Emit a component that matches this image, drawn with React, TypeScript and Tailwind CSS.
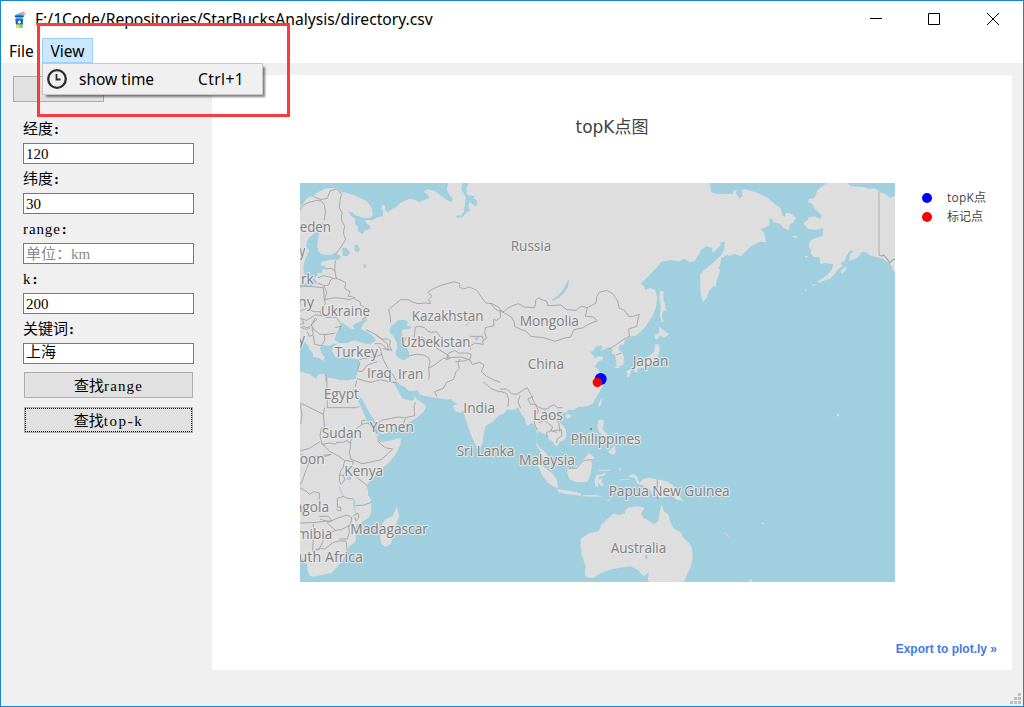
import { useState } from "react";

const LAND = [
  "M0 70 L10 62 18 48 26 42 40 40 48 30 62 24 78 16 95 15 112 16 124 28 135 28 152 34 175 42 200 54 214 72 219 92 212 104 195 105 180 101 165 96 156 88 145 86 152 98 166 108 164 124 174 130 172 144 187 152 196 142 211 137 210 128 200 122 195 110 216 112 234 103 248 99 250 85 244 76 247 66 256 68 254 80 264 88 279 76 292 70 300 60 328 47 346 50 356 58 372 52 388 44 384 34 370 26 382 19 405 24 425 40 440 50 455 58 458 48 448 36 441 20 444 0 L487 0 484 22 490 28 498 44 494 70 492 86 484 97 466 98 474 104 488 103 500 88 510 82 505 70 508 56 524 68 532 66 530 52 520 46 524 38 512 38 500 34 500 12 506 0 L1230 0 1233 26 1245 32 1298 33 1302 22 1313 22 1308 30 1318 46 1328 40 1324 22 1334 18 1355 24 1380 33 1402 44 1420 60 1442 76 1448 98 1456 101 1457 90 1470 90 1480 98 1488 106 1478 120 1470 124 1466 142 1450 134 1440 122 1420 118 1416 106 1408 108 1408 124 1400 132 1382 138 1390 146 1396 162 1398 178 1380 176 1350 192 1322 220 1304 212 1286 220 1284 214 1264 226 1260 246 1254 254 1260 262 1254 284 1250 290 1248 308 1236 312 1226 326 1220 346 1208 358 1202 332 1200 275 1212 262 1238 240 1264 216 1272 200 1275 176 1262 178 1260 190 1238 210 1236 194 1220 190 1202 202 1198 212 1184 234 1168 238 1160 230 1148 228 1140 235 1110 232 1084 236 1066 258 1040 284 1022 302 1032 310 1036 320 1050 315 1066 322 1072 345 1068 372 1056 402 1034 434 1008 458 992 460 976 470 972 484 960 486 956 500 968 510 972 526 970 545 950 553 948 530 945 515 935 512 938 498 926 492 910 500 900 503 908 492 904 486 886 492 882 502 872 506 878 516 886 526 892 520 910 521 908 530 892 538 885 552 896 560 902 575 912 590 908 608 900 625 888 644 878 662 860 670 835 672 818 682 804 680 800 690 788 686 776 680 770 690 762 696 768 706 782 720 796 736 800 754 794 770 780 776 770 790 762 784 760 776 746 768 740 756 726 750 716 744 710 758 709 778 720 796 730 802 742 816 750 836 756 850 744 842 730 826 722 806 710 788 708 776 712 754 704 728 694 718 690 724 680 728 674 706 664 694 656 674 642 680 620 680 612 692 598 696 580 714 556 730 551 752 548 778 540 796 532 796 518 768 505 735 496 705 492 682 480 690 466 684 458 670 472 664 460 655 452 648 440 650 410 644 385 641 360 635 352 622 340 624 326 624 312 610 300 606 292 597 278 595 288 612 296 625 306 646 322 650 336 654 343 648 342 638 352 650 368 660 378 672 370 688 350 704 330 716 308 728 280 738 250 754 240 752 236 736 226 716 210 692 198 672 188 650 172 636 166 618 156 620 172 648 182 668 190 690 204 716 214 732 224 744 234 754 236 766 248 777 276 772 302 764 302 784 288 812 268 838 246 856 226 878 208 896 198 908 204 920 204 936 212 948 214 986 208 1002 194 1012 170 1027 160 1040 168 1060 166 1078 148 1090 142 1106 130 1128 112 1152 95 1170 68 1175 40 1181 28 1178 22 1160 22 1146 10 1130 0 1115Z",
  "M1580 0 L1640 0 1655 10 1690 12 1710 18 1725 16 1740 28 1755 32 1770 44 1785 38 1785 270 1778 258 1776 250 1766 240 1750 228 1730 222 1712 218 1698 208 1686 206 1676 220 1666 228 1648 234 1650 214 1662 202 1650 203 1640 218 1634 234 1622 240 1628 248 1612 262 1602 276 1588 288 1566 295 1558 300 1552 296 1574 282 1586 272 1596 258 1600 244 1578 240 1562 244 1558 222 1540 222 1532 210 1534 202 1526 190 1532 172 1545 166 1568 160 1570 136 1550 140 1524 138 1510 120 1524 110 1526 102 1545 100 1560 108 1566 98 1544 76 1536 62 1522 56 1528 48 1544 44 1552 22Z",
  "M1622 264 L1640 248 1638 262 1626 272Z",
  "M1476 160 L1490 158 1494 164 1484 164Z",
  "M1515 219h8v4h-8z",
  "M1535 307l10-4 2 3-10 3zM1514 321l4-3 1 3-3 3zM1504 329h3v2h-3z",
  "M1080 324 L1090 324 1090 344 1096 372 1098 382 1088 386 1086 404 1092 416 1084 418 1080 396 1082 370 1078 348Z",
  "M1078 430 L1088 440 1108 454 1090 464 1080 458 1070 470 1064 466 1066 456 1078 450Z",
  "M1066 484 L1076 484 1080 500 1074 522 1066 534 1050 540 1036 552 1020 556 1004 558 998 550 1018 542 1036 528 1050 516 1062 508Z",
  "M982 562 L994 558 992 572 986 584 980 580 984 572 978 566Z",
  "M1000 556l14 0-2 10-8 2z",
  "M944 551h12v4h-12z",
  "M902 650 L907 646 904 662 898 672 894 664Z",
  "M798 694 L810 694 814 700 804 708 796 702Z",
  "M896 710 L910 710 912 724 906 738 920 750 926 762 908 756 896 746 892 728Z",
  "M924 806 L944 788 948 806 940 816 928 810Z",
  "M917 765l16 6-4 20-12-12z",
  "M710 838 L724 846 740 858 760 874 770 888 774 914 762 912 742 898 728 880 718 858Z",
  "M770 919 L798 922 830 928 844 932 842 938 806 934 776 928Z",
  "M846 937l40-1 24 4-24 1-40-1zM920 954l20-12-14 13z",
  "M802 854 L816 856 836 846 846 834 858 822 866 810 878 818 884 824 874 830 876 850 872 872 862 896 846 898 824 896 808 888 802 870Z",
  "M888 876 L906 874 916 870 914 878 898 880 896 890 908 886 904 896 912 910 902 908 894 898 894 912 886 910 884 894Z",
  "M896 860h34v3h-34zM958 852l5 6-3 8-3-6zM956 890l30-2 2 2-30 2z",
  "M988 876 L1004 874 1012 884 1018 900 1030 888 1046 884 1080 890 1104 896 1124 912 1132 930 1150 954 1130 950 1112 934 1092 944 1074 942 1056 934 1048 918 1026 906 1012 902 1004 884 990 882Z",
  "M1085 963 L1092 985 1106 995 1110 1015 1120 1036 1142 1048 1150 1064 1168 1080 1176 1096 1178 1124 1174 1150 1162 1172 1152 1197 1046 1197 1044 1188 1046 1168 1032 1180 1024 1174 1014 1160 990 1150 960 1154 928 1160 904 1170 878 1186 858 1182 854 1168 858 1154 846 1118 842 1090 842 1068 868 1050 896 1044 904 1026 922 1008 940 992 958 996 974 992 978 978 992 972 1014 970 1034 974 1024 990 1030 1004 1048 1014 1062 1022 1074 1016 1078 994Z",
  "M291 971 L298 1000 288 1024 280 1056 272 1084 256 1092 244 1082 240 1060 248 1044 246 1022 258 1008 278 998Z",
  "M1611 693h6v6l-6 2zM1384 1019h8v3h-8zM1272 1048l16 12-2 1-15-12zM1348 1188l8 3 1 6-9-2z",
];

const WATER = [
  "M66 118 L80 124 76 138 56 152 54 170 52 188 56 208 66 214 90 216 106 210 124 220 116 230 92 230 66 236 62 246 76 250 78 256 66 262 66 270 54 270 48 284 38 282 24 284 14 276 10 252 16 226 28 204 18 190 22 170 44 150 60 140Z",
  "M0 306 L16 302 30 288 42 286 54 300 30 310 0 314Z",
  "M126 196l12-2 12 14-8 12-14-2zM162 188l10-4 8 16-6 8-10-4zM190 244l10 2-4 10-6-4z",
  "M120 418 L134 424 150 436 164 440 158 428 168 420 184 414 200 406 202 412 192 420 186 430 182 438 200 446 220 460 228 472 212 484 188 480 164 472 140 480 118 480 104 470 110 450 118 436Z",
  "M272 430 L284 422 294 412 312 410 324 416 320 428 336 432 326 438 306 440 304 452 312 462 322 464 314 476 318 490 326 506 328 522 310 532 290 520 286 510 292 494 290 478 280 460 268 446Z",
  "M0 466 L14 478 26 490 28 500 38 510 40 522 56 524 70 534 74 522 64 510 60 494 68 486 90 488 98 482 112 482 98 492 96 504 106 522 120 526 140 520 158 526 178 530 174 560 166 588 144 592 124 592 100 586 82 584 70 572 56 574 48 588 30 574 14 570 0 564Z",
  "M804 292l3 0-4 22-12 18-16 14-18 8 0-6 16-8 16-20zM498 424l14-10-10 12-6 6zM524 464l14-4-4 10-8 2zM118 906l6 18 8 16-4-2-10-20zM160 948l6 4-2 20 6 24-4-4-6-24zM142 882l14-2-4 10-12 0zM1035 1117h8v10h-8z",
];

const BORDERS = [
  "M0 82 L8 68 22 60 42 54 50 52 64 54 74 68 76 90 72 112M40 40 L62 50 82 46 90 24 108 18 116 22 124 34 120 52 118 74 126 90 124 110 134 130 130 150 137 170 120 196 106 214M106 232 L104 256 108 286 124 292 138 300 134 316 150 326 144 340 156 340 164 348 180 356 182 366 198 376 208 386 202 400 186 410M76 258l18-2 10 8M54 284l16-6 20 4 14 6 6-4M54 300l18 8 14-2 4-12 8-8M72 308l8 20-6 22 30-6 24 2 22 4 16-8",
  "M0 308 L24 310 70 314 72 342 76 362 66 378 60 390 78 404 96 402 110 404 120 418M0 384l20-8 22 10 18 0M0 406l20 6 26-16 22 2M6 408l6 14-12 2M0 432l20 8 16-16 16-18M22 446l6 14 12-4-4-24M46 404l-12 22 8 14 18 14 24 0 22-4M40 458l4 26 20 4 10-16 0-16M30 436l-22-6M106 434l16-4-4 12",
  "M272 418 L270 396 266 380 280 368 302 350 324 350 340 358 354 362 376 360 392 362 386 350 396 340 384 328 394 320 420 308 442 302 462 296 480 302 478 312 490 318 508 312 530 322 544 342 558 360 576 362 596 372 600 380M574 364 L588 380 600 384 602 402 590 412 580 410 582 428 556 434 554 450 560 466 548 474 550 484 524 480 510 490 512 500",
  "M342 466 L346 432 358 430 374 434 384 446 396 448 410 446 424 466 436 478 444 488M346 468l20-6 30 22 24 18 24 14 6 10-10 4 4-18 20-10 12 8 26 0 12 4-4 14-20 6-24 2M510 460l38 0 2 14M328 518 L350 514 370 516 386 524 390 536 386 556 388 580 386 590M386 556l20-12 24-18 22-2 28-2 18 4 12 6M480 528 L474 540 478 556 468 566 460 590 440 598 430 616 404 626 410 640M510 530 L516 544 540 538 552 546 544 566 560 580 580 590 600 598",
  "M198 440l28 14 20 14 16 0 10 6-4 14 8 14-16-4-16-16-20 0M226 454l20 16 16 12 4 20-18-6 M234 490l8 8 2 14 6 18 14 26 14 18 10 18M178 530l14-4 32-4 22-8M180 536l-6 24M172 564l14 2 16-20 30-10M170 586l24 8 20 4 26-8 34 8 16 0M78 596L78 575M80 584l2 90M82 674l88 0 8-4M166 612l4-20",
  "M0 660 L18 668 70 694 74 674M70 694 L74 732 64 736 60 758 66 784 74 788 M0 804l28-8 32-20M0 664l6 30-4 30M66 784 L90 780 106 784 110 778 130 778 142 772 148 780 156 768 160 754 170 736 184 726 186 712 200 712M184 724l20-4 20 16 6 16M230 760l14 18M232 770l6 10 18 14 22 4-34 32-26 6-32 6-24-10-10-4-4-20 4-18 0-16M68 784 L90 806 114 818 134 832 160 836 156 850 166 862 166 880 200 906M134 834 L128 856 122 864 118 878 130 876 134 890 124 904 118 894 118 880M0 812 L24 826 30 822 24 848 16 866 8 892 0 906M28 822l34-4 30-4",
  "M70 822 L94 814M0 914 L20 926 28 934 40 926 58 930 58 952 56 988M60 1008l28 10 6-6-8-12-28 0M112 972l0-26 18-6 M112 972l10 0 0 12-12-4M128 940l16 6 16 2M166 968l26-2 22-8M160 998l14-8 2 14-8 10-4-12M0 1020l50-2 30-4 16 0M80 1018l26 24 18-2 26-14 6-22-16-8-34 12-16 8M106 1042l-30 18-16 34-16 8-8 4M40 1022l0 38-2 44M118 1068l24 0 6-20-2-20M52 1102l10-6 12 2 26-20 18-4 20 0 4 32 4 8",
  "M600 382 L612 386 622 376 638 368 656 362 672 372 704 374 708 350 714 344 730 352 740 354 744 368 782 366 800 380 828 382 844 370 862 374 874 368 888 360 890 342 898 328 920 322 938 332 952 352 958 376 974 382 986 400 1000 400 1018 394 1014 408 1010 430 998 434 986 438 988 460 966 472 950 484 928 498",
  "M600 384 L614 390 634 402 642 416 644 430 664 440 678 444 692 460 730 464 766 475 790 466 812 462 822 440 850 434 864 424 892 413 880 402 856 400 862 374M948 516l16-6",
  "M308 732l8-28 28-6-2-28 4-12M312 704l-18-2-50 10-16 14 M600 618 L620 618 634 632 650 634 682 614 M550 597l24 20 26 10M600 624l20 8 6 16-2 24M660 638l-6 18 8 20 M682 614l14 28 6 16 10 12 16 8 16 0 4-8 16-4 8 8 16 0M700 640l-16 8 8 16 14 0 10 20M716 684l-14 20 2 20 8 18M734 680l10 20 14 0 18 18 4 28M716 720l16-8 14 10 12 10-6 12-12 4 2 16M758 744l26-4 2 18-14 10-2 12M750 742l20 6",
  "M806 856l24 0 10-12 12-12 24-2M1072 888l0 58 4 0",
];

const LABELS: [string, number, number, number][] = [
  ["eden", -1, 146, 94],
  ["y", -2, 219, 18],
  ["ark", -20, 303, 61],
  ["ny", -7, 372, 49],
  ["y", -5, 484, 20],
  ["Ukraine", 63, 398, 147],
  ["Kazakhstan", 335, 413, 216],
  ["Uzbekistan", 303, 491, 209],
  ["Turkey", 104, 521, 130],
  ["Iraq", 201, 584, 74],
  ["Iran", 294, 587, 76],
  ["Russia", 632, 204, 122],
  ["Mongolia", 659, 430, 178],
  ["China", 683, 559, 109],
  ["Japan", 998, 549, 107],
  ["Egypt", 71, 649, 106],
  ["India", 490, 691, 95],
  ["Yemen", 209, 747, 133],
  ["Sudan", 65, 765, 121],
  ["Sri Lanka", 470, 818, 173],
  ["oon", -1, 843, 75],
  ["Kenya", 133, 880, 116],
  ["ngola", -18, 988, 105],
  ["Madagascar", 151, 1053, 233],
  ["mibia", -9, 1069, 106],
  ["outh Africa", -30, 1137, 219],
  ["Laos", 699, 710, 90],
  ["Philippines", 812, 783, 210],
  ["Malaysia", 657, 846, 168],
  ["Papua New Guinea", 926, 939, 363],
  ["Australia", 932, 1110, 167],
];

function WorldMap() {
  return (
    <svg
      viewBox="0 0 1785 1197"
      className="block h-[399px] w-[595px] overflow-hidden"
      role="img"
    >
      <rect width="1785" height="1197" fill="#a0cfdf" />
      <path d={LAND.join("")} fill="#dedede" />
      <path d={WATER.join("")} fill="#a0cfdf" />
      <path
        d={BORDERS.join("")}
        fill="none"
        stroke="#a0a0a0"
        strokeWidth="2.6"
        strokeLinejoin="round"
      />
      <path d="M1737 28V216" stroke="#c0c0c0" strokeWidth="5" />
      <path
        d="M1737 216l8 3 6-3 8 10 4 4 6 10 8-8 8-4"
        fill="none"
        stroke="#aaaaaa"
        strokeWidth="4"
      />
      <path d="M871 735h5v5h-5z" fill="#777" />
      <g
        fontFamily='"Open Sans", "Noto Sans", sans-serif'
        fontSize="43"
        fill="#808080"
        stroke="#e8e8e8"
        strokeOpacity="0.85"
        strokeWidth="7"
        strokeLinejoin="round"
        style={{ paintOrder: "stroke" }}
      >
        {LABELS.map(([name, x, y, width]) => (
          <text
            key={`${name}-${y}`}
            x={x}
            y={y}
            textLength={width}
            lengthAdjust="spacingAndGlyphs"
          >
            {name}
          </text>
        ))}
      </g>
      <circle cx="902" cy="588" r="18" fill="#0000ff" />
      <circle cx="892" cy="598" r="14" fill="#ff0000" />
    </svg>
  );
}

function CupIcon() {
  return (
    <svg viewBox="0 0 16 16" className="h-4 w-4">
      <path
        d="M8.2 4V1.6L13.4 .4M10 2.6l4.4-.6"
        fill="none"
        stroke="#f0506e"
        strokeWidth="1"
      />
      <path d="M4.6 3.4C4.8 2.2 6 1.8 8 1.8s3.6.4 3.8 1.6z" fill="#5ec4ec" />
      <path d="M3.8 3.4h9v1.5h-9z" fill="#1b3d87" />
      <path d="M4.4 4.9h7.8L11.4 16H5.4z" fill="#3bb7ef" />
      <path d="M4.4 7.2h7.8l-.4 5.4H4.9z" fill="#1c5fc0" />
      <circle cx="8.3" cy="9.9" r="1.5" fill="#fff" />
      <path d="M5 12.6h3.6V16H5.3z" fill="#f5da4c" />
      <path d="M8.6 12.6h3.1l-.3 3.4H8.6z" fill="#8ed75a" />
    </svg>
  );
}

function ClockIcon() {
  return (
    <svg viewBox="0 0 20 20" className="h-5 w-5" fill="none" stroke="#2d2d2d">
      <circle cx="10" cy="10" r="8.8" strokeWidth="2.3" />
      <path d="M9.5 5v5.5h4" strokeWidth="1.8" />
    </svg>
  );
}

function Field({
  label,
  value,
  placeholder,
}: {
  label: string;
  value?: string;
  placeholder?: string;
}) {
  const latin = /^[a-z]/.test(label);
  const cjkValue = value !== undefined && !/^\d/.test(value);
  return (
    <label className="block h-[50px]">
      <span
        className={`block h-[25px] whitespace-nowrap ${
          latin ? "leading-[22px] tracking-[0.9px]" : "leading-[23px]"
        }`}
      >
        {label}
        <span className="ml-px font-bold tracking-normal">:</span>
      </span>
      <input
        className={`block h-[21px] w-[171px] rounded-none border border-[#7a7a7a] bg-white px-[2px] outline-none placeholder:text-[#8a8a8a] ${
          cjkValue ? "pb-[2px] pt-0" : "pb-0 pt-[2px]"
        }`}
        defaultValue={value}
        placeholder={placeholder}
      />
    </label>
  );
}

export default function App() {
  const [menuOpen] = useState(true);
  return (
    <div className="relative flex h-[707px] w-[1024px] flex-col overflow-hidden border border-[#1883d7] bg-[#f0f0f0] font-['Noto_Sans','Noto_Sans_CJK_SC',sans-serif] text-black">
      <header className="flex h-[37px] shrink-0 items-center bg-white pl-[10px]">
        <CupIcon />
        <h1 className="ml-2 w-[410px] whitespace-nowrap pb-[2px] text-[15.65px] leading-[34px]">
          F:/1Code/Repositories/StarBucksAnalysis/directory.csv
        </h1>
        <div className="ml-auto flex items-center pb-px pr-[24px]">
          <svg viewBox="0 0 12 12" className="mr-[46px] h-3 w-3">
            <path d="M0 5.5h12" stroke="#000" />
          </svg>
          <svg viewBox="0 0 12 12" className="mr-[47px] h-3 w-3">
            <path d="M.5 .5h11v11H.5z" fill="none" stroke="#000" />
          </svg>
          <svg viewBox="0 0 12 12" className="h-3 w-3">
            <path d="M0 0l12 12M12 0L0 12" stroke="#000" />
          </svg>
        </div>
      </header>

      <nav className="flex h-[25px] shrink-0 bg-white text-[15.5px] leading-[25px]">
        <div className="w-[41px] pl-2 leading-[27px]">File</div>
        <div className="relative h-[25px] w-[51px] border border-[#99d1ff] bg-[#cce8ff] text-center leading-[25px]">
          View
          {menuOpen && (
            <div className="absolute left-[-1px] top-[24px] z-10 flex h-[32px] w-[221px] items-center border border-[#c8c8c8] bg-[#f0f0f0] pl-1 pr-[18px] shadow-[3px_3px_2px_-1px_rgba(0,0,0,0.5)]">
              <ClockIcon />
              <span className="ml-[12px] whitespace-nowrap">show time</span>
              <span className="ml-auto whitespace-nowrap tracking-[0.4px]">
                Ctrl+1
              </span>
            </div>
          )}
        </div>
      </nav>

      <main className="flex min-h-0 flex-1">
        <aside className="w-[211px] shrink-0 pt-[13px] font-['Liberation_Serif','Noto_Sans_CJK_SC',serif] text-[15px] text-black">
          <div className="ml-3 h-[26px] w-[91px] border border-[#adadad] bg-[#e1e1e1]" />
          <form className="ml-[22px] w-[171px] pt-[16px]">
            <Field label="经度" value="120" />
            <Field label="纬度" value="30" />
            <Field label="range" placeholder="单位：km" />
            <Field label="k" value="200" />
            <Field label="关键词" value="上海" />
            <button
              type="button"
              className="mx-px mt-[4px] flex h-[26px] w-[169px] items-center justify-center border border-[#adadad] bg-[#e1e1e1] pt-[3px]"
            >
              查找<span className="tracking-[1.1px]">range</span>
            </button>
            <button
              type="button"
              className="mx-px mt-[9px] block h-[26px] w-[169px] border border-[#adadad] bg-[#e1e1e1]"
            >
              <span className="flex h-full items-center justify-center border border-dotted border-black pt-[3px]">
                查找<span className="tracking-[1.6px]">top-k</span>
              </span>
            </button>
          </form>
        </aside>

        <section className="mt-[12px] flex h-[595px] w-[800px] flex-col bg-white text-[#444]">
          <h2 className="pt-[40px] text-center font-['DejaVu_Sans','Noto_Sans_CJK_SC',sans-serif] text-[17px] leading-[24px]">
            topK点图
          </h2>
          <div className="mt-[44px] flex pl-[88px]">
            <WorldMap />
            <ul className="ml-[27px] mt-[5px] font-['Open_Sans','Noto_Sans_CJK_SC',sans-serif] text-[12px] leading-[19px]">
              <li className="flex items-center">
                <span className="mr-[15px] h-[10px] w-[10px] rounded-full bg-[#0000ff]" />
                <span className="tracking-[0.2px]">topK点</span>
              </li>
              <li className="flex items-center">
                <span className="mr-[15px] h-[10px] w-[10px] rounded-full bg-[#ff0000]" />
                标记点
              </li>
            </ul>
          </div>
          <a className="ml-auto mr-[15px] mt-[57px] whitespace-nowrap font-['Liberation_Sans',sans-serif] text-[12px] font-bold leading-5 text-[#447adb]">
            Export to plot.ly »
          </a>
        </section>
      </main>

      <svg
        viewBox="0 0 11 11"
        className="absolute bottom-[2px] right-[2px] h-[11px] w-[11px]"
        fill="#bfbfbf"
      >
        <path d="M8 0h3v3H8zM4 4h3v3H4zM8 4h3v3H8zM0 8h3v3H0zM4 8h3v3H4zM8 8h3v3H8z" />
      </svg>
      <div className="pointer-events-none absolute left-[36px] top-[22px] z-20 h-[94px] w-[253px] border-[3px] border-[#fb3a3c]" />
    </div>
  );
}
